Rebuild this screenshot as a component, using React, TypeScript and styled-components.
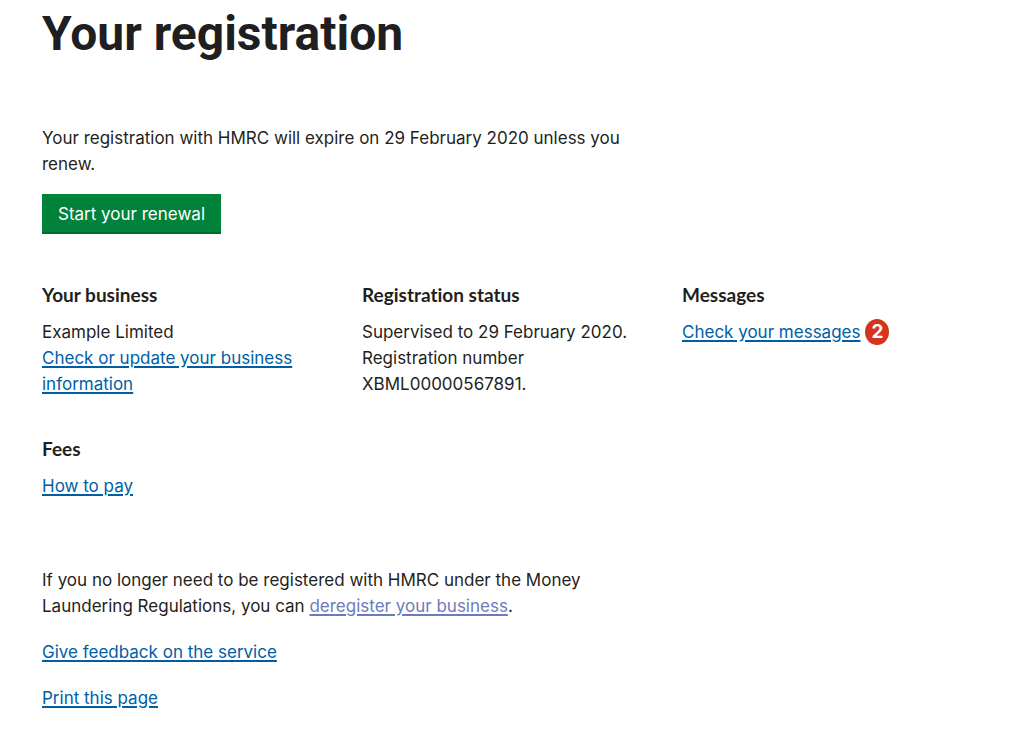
import React from "react";
import styled, { createGlobalStyle } from "styled-components";

const GlobalStyle = createGlobalStyle`
  * { box-sizing: border-box; }
  body {
    margin: 0;
    background: #ffffff;
    color: #1f1f21;
    font-family: Inter, "Liberation Sans", sans-serif;
    font-size: 17px;
    line-height: 26px;
  }
`;

const Page = styled.main`
  padding: 5px 20px 20px 42px;
`;

const Title = styled.h1`
  margin: 0 0 62px;
  font-family: Roboto, "Liberation Sans", sans-serif;
  font-size: 48px;
  line-height: 58px;
  font-weight: 700;
`;

const Paragraph = styled.p`
  margin: 0 0 20px;
  max-width: 620px;
`;

const Intro = styled(Paragraph)`
  margin-bottom: 17px;
`;

const StartButton = styled.button`
  display: block;
  margin: 0 0 48px;
  padding: 7px 16px 5px;
  border: 0;
  border-bottom: 2px solid #006b32;
  background: #00823b;
  color: #ffffff;
  font: inherit;
  cursor: pointer;
`;

const Grid = styled.div`
  display: grid;
  grid-template-columns: repeat(3, 1fr);
  row-gap: 39px;
  margin-bottom: 68px;
`;

const Panel = styled.section`
  padding-right: 30px;
`;

const PanelTitle = styled.h2`
  margin: 0 0 11px;
  font-family: Lato, "Liberation Sans", sans-serif;
  font-size: 19px;
  line-height: 26px;
  font-weight: 700;
  font-variant-ligatures: none;
`;

const PanelText = styled.p`
  margin: 0;
`;

const Link = styled.a<{ $visited?: boolean }>`
  color: ${(p) => (p.$visited ? "#6c7cba" : "#005ea5")};
  text-decoration: underline;
  text-decoration-thickness: 2px;
  text-underline-offset: 2px;
  text-decoration-skip-ink: auto;
`;

const MessageRow = styled.div`
  display: flex;
  align-items: center;
  gap: 5px;
`;

const Badge = styled.span`
  width: 24px;
  height: 26px;
  border-radius: 50%;
  background: #d4351c;
  color: #ffffff;
  font-size: 19px;
  font-weight: 700;
  text-align: center;
`;

export default function App() {
  return (
    <Page>
      <GlobalStyle />
      <Title>Your registration</Title>
      <Intro>
        Your registration with HMRC will expire on 29 February 2020 unless you renew.
      </Intro>
      <StartButton type="button">Start your renewal</StartButton>
      <Grid>
        <Panel>
          <PanelTitle>Your business</PanelTitle>
          <PanelText>Example Limited</PanelText>
          <Link href="#business">Check or update your business information</Link>
        </Panel>
        <Panel>
          <PanelTitle>Registration status</PanelTitle>
          <PanelText>Supervised to 29 February 2020.</PanelText>
          <PanelText>Registration number XBML00000567891.</PanelText>
        </Panel>
        <Panel>
          <PanelTitle>Messages</PanelTitle>
          <MessageRow>
            <Link href="#messages">Check your messages</Link>
            <Badge>2</Badge>
          </MessageRow>
        </Panel>
        <Panel>
          <PanelTitle>Fees</PanelTitle>
          <Link href="#fees">How to pay</Link>
        </Panel>
      </Grid>
      <Paragraph>
        If you no longer need to be registered with HMRC under the Money Laundering Regulations, you can{" "}
        <Link href="#deregister" $visited>deregister your business</Link>.
      </Paragraph>
      <Paragraph><Link href="#feedback">Give feedback on the service</Link></Paragraph>
      <Paragraph><Link href="#print">Print this page</Link></Paragraph>
    </Page>
  );
}
